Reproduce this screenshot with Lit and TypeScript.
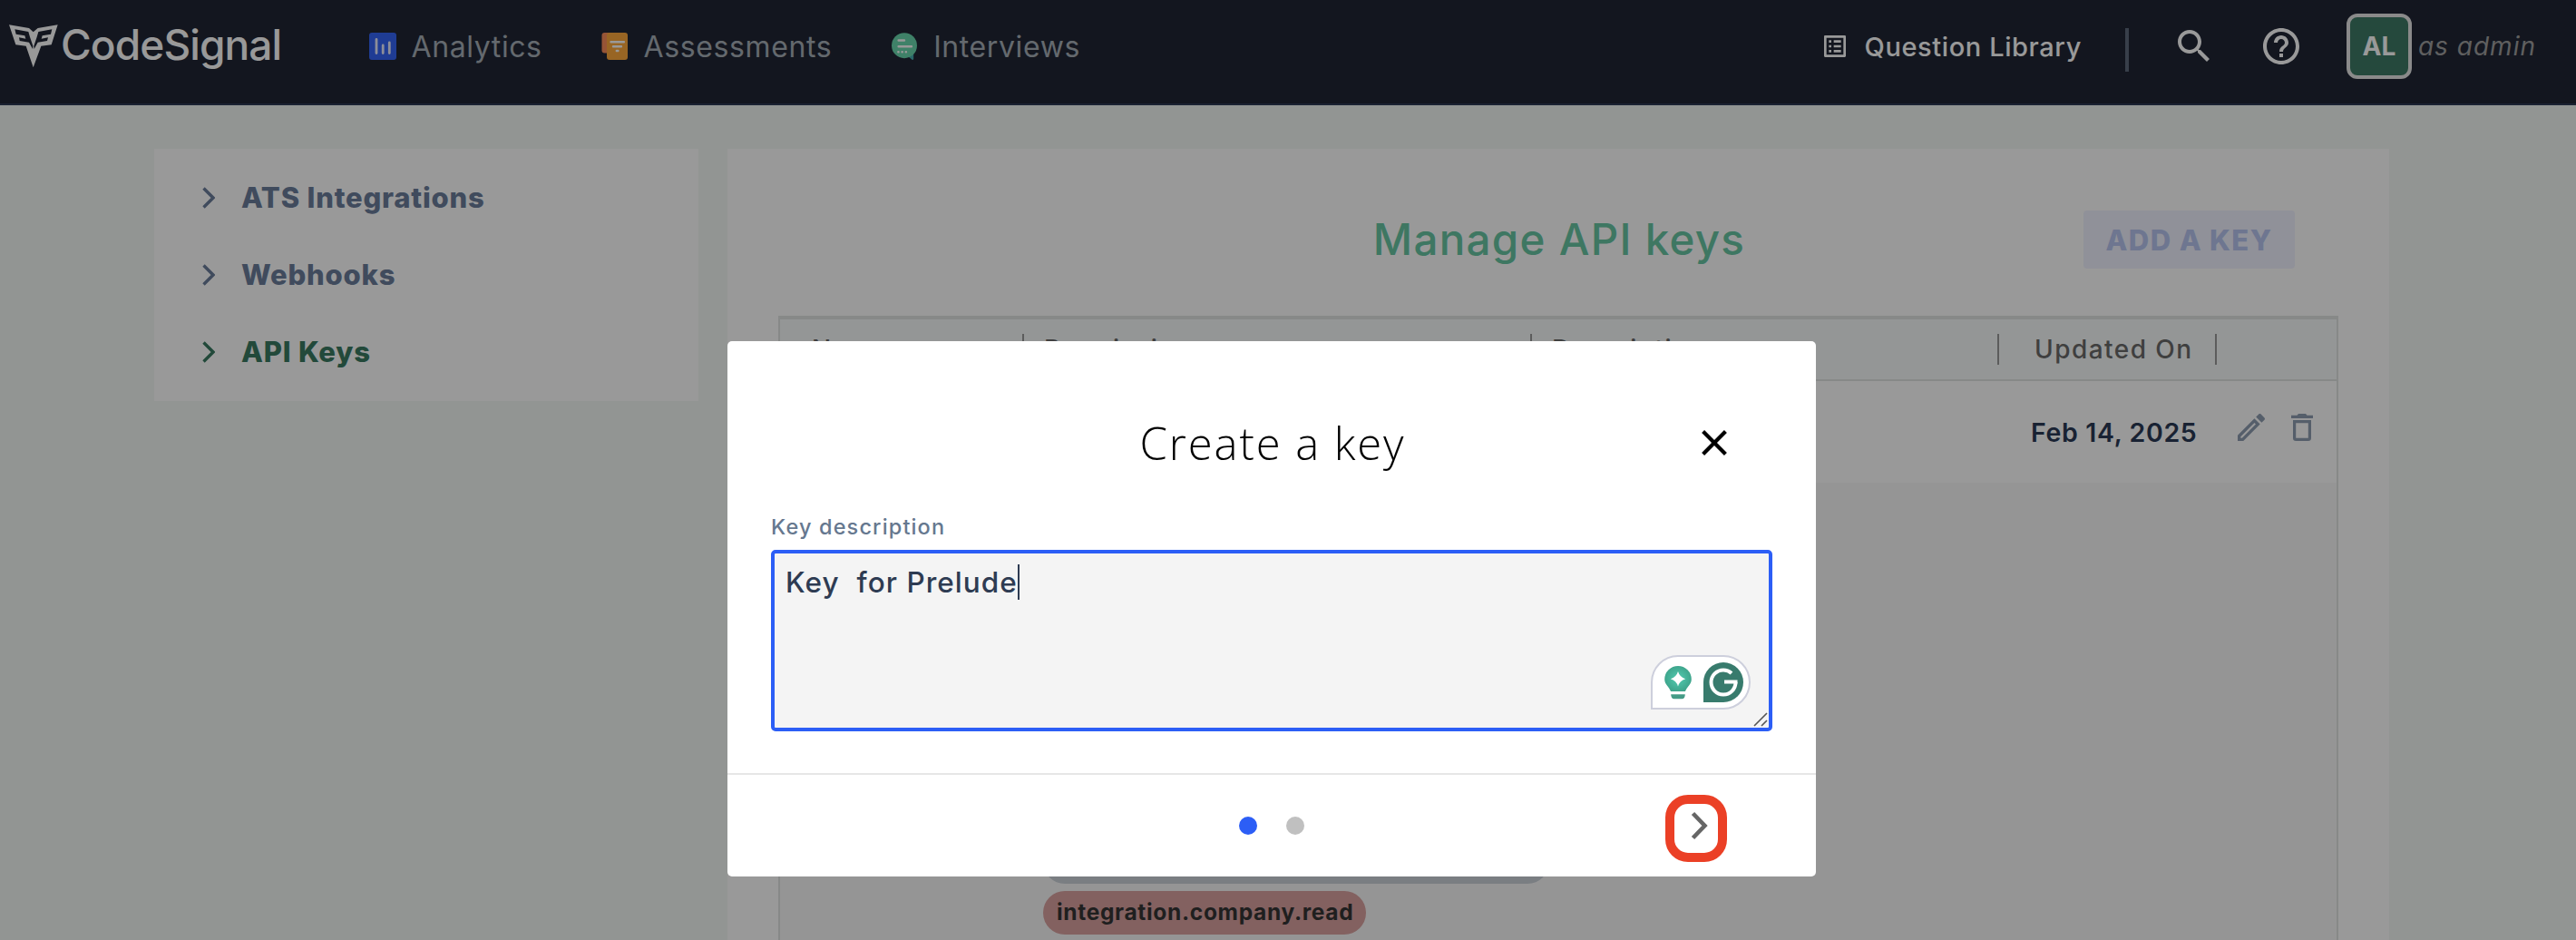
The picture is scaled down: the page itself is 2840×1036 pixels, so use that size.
import { LitElement, css, html, svg } from 'lit';
import { customElement, property, state } from 'lit/decorators.js';
import { classMap } from 'lit/directives/class-map.js';

type NavIcon = 'analytics' | 'assessments' | 'interviews';

interface NavItem {
  icon: NavIcon;
  label: string;
}

interface ApiKeyRow {
  updatedOn: string;
  permissions: { name: string; tone: 'neutral' | 'danger' }[];
}

const NAV_ITEMS: NavItem[] = [
  { icon: 'analytics', label: 'Analytics' },
  { icon: 'assessments', label: 'Assessments' },
  { icon: 'interviews', label: 'Interviews' },
];

const navIcons = {
  analytics: svg`
    <rect width="30" height="30" x="0" y="0" rx="3" fill="#3464f7" />
    <path d="M8 7.5v15M15.2 14v8.5M22.3 11v11.5" stroke="#e9edff" stroke-width="2.8" stroke-linecap="round" />
  `,
  assessments: svg`
    <rect x="0.5" y="0" width="14" height="22.5" rx="3" fill="#fa8c5a" />
    <rect x="6" y="0" width="23" height="30" rx="3" fill="#fda83c" />
    <path d="M10.5 10.3h14.4M13 15.3h9M16.8 20h1.6" stroke="#fff" stroke-width="2.4" stroke-linecap="round" />
  `,
  interviews: svg`
    <path d="M18 26l6.2-3.6v6.4q0 1.4-1.7 1z" fill="#45aeb0" />
    <circle cx="14" cy="14.2" r="14" fill="#69d7ad" />
    <path d="M7.6 8.5h6.4M7.6 15.3h14.4" stroke="#fff" stroke-width="2.4" stroke-linecap="round" />
    <path d="M7.4 21.3h.1M11.6 21.3h.1M15.8 21.3h.1" stroke="#fff" stroke-width="2.6" stroke-linecap="round" />
  `,
};

/**
 * Top navigation bar with the product logo, section links and account area.
 */
@customElement('cs-top-bar')
export class CsTopBar extends LitElement {
  @property({ type: String })
  initials = '';

  @property({ type: String, attribute: 'view-as' })
  viewAs = '';

  render() {
    return html`
      <header class="bar">
        <div class="brand">
          <svg class="mark" viewBox="30 52 162 142" fill="none">
            <path fill="#fff" d="M30 52l66 11 14 13 15-13 66-11-21 66-34 4-26 71-24-71-34-4z" />
            <path fill="#202635" d="M49 67l45 8 5 17 10 30-1 10-12-22-31-5-2-11 22 4-3-10-29-5z" />
            <path fill="#202635" d="M172 67l-45 8-5 17-10 30 1 10 12-22 31-5 3-11-22 4 3-10 28-5z" />
          </svg>
          <span class="brand-name">CodeSignal</span>
        </div>
        <nav class="nav">
          ${NAV_ITEMS.map((item) => html`
            <a class="nav-item">
              <svg class="nav-icon" viewBox="0 0 30 30" fill="none">${navIcons[item.icon]}</svg>
              <span>${item.label}</span>
            </a>
          `)}
        </nav>
        <div class="tools">
          <a class="library">
            <svg width="32" height="32" viewBox="0 0 24 24" fill="currentColor">
              <path d="M19 5v14H5V5h14m1.1-2H3.9c-.5 0-.9.4-.9.9v16.2c0 .4.4.9.9.9h16.2c.4 0 .9-.5.9-.9V3.9c0-.5-.5-.9-.9-.9zM11 7h6v2h-6V7zm0 4h6v2h-6v-2zm0 4h6v2h-6zM7 7h2v2H7zm0 4h2v2H7zm0 4h2v2H7z" />
            </svg>
            <span>Question Library</span>
          </a>
          <span class="divider"></span>
          <svg width="48" height="48" viewBox="0 0 24 24" fill="currentColor">
            <path d="M15.5 14h-.79l-.28-.27C15.41 12.59 16 11.11 16 9.5 16 5.91 13.09 3 9.5 3S3 5.91 3 9.5 5.91 16 9.5 16c1.61 0 3.09-.59 4.23-1.57l.27.28v.79l5 4.99L20.49 19l-4.99-5zm-6 0C7.01 14 5 11.99 5 9.5S7.01 5 9.5 5 14 7.01 14 9.5 11.99 14 9.5 14z" />
          </svg>
          <svg width="48" height="48" viewBox="0 0 24 24" fill="currentColor">
            <path d="M11 18h2v-2h-2v2zm1-16C6.48 2 2 6.48 2 12s4.48 10 10 10 10-4.48 10-10S17.52 2 12 2zm0 18c-4.41 0-8-3.59-8-8s3.59-8 8-8 8 3.59 8 8-3.59 8-8 8zm0-14c-2.21 0-4 1.79-4 4h2c0-1.1.9-2 2-2s2 .9 2 2c0 2-3 1.75-3 5h2c0-2.25 3-2.5 3-5 0-2.21-1.79-4-4-4z" />
          </svg>
          <div class="account">
            <span class="avatar">${this.initials}</span>
            <span class="view-as">as ${this.viewAs}</span>
          </div>
        </div>
      </header>
    `;
  }

  static styles = css`
    :host {
      display: block;
    }

    .bar {
      box-sizing: border-box;
      display: flex;
      align-items: center;
      height: 116px;
      padding: 0 44px 12px 10px;
      background: #202635;
      border-bottom: 2px solid #2d3a55;
      color: #fff;
    }

    .brand {
      display: flex;
      align-items: center;
      width: 397px;
    }

    .mark {
      width: 54px;
      height: 48px;
    }

    .brand-name {
      padding: 0 0 4px 3px;
      font-size: 46px;
      font-weight: 500;
      letter-spacing: -0.9px;
    }

    .nav {
      display: flex;
      gap: 65.5px;
      font-size: 32px;
      letter-spacing: 0.6px;
      color: #a7afb7;
    }

    .nav-item {
      display: flex;
      align-items: center;
      gap: 16.5px;
    }

    .nav-icon {
      width: 30px;
      height: 30px;
    }

    .tools {
      display: flex;
      align-items: center;
      gap: 48px;
      margin-left: auto;
    }

    .library {
      display: flex;
      align-items: center;
      gap: 17px;
      font-size: 29px;
      font-weight: 500;
      letter-spacing: 0.6px;
    }

    .divider {
      width: 4px;
      height: 48px;
      margin-top: 8px;
      background: #5e697c;
    }

    .account {
      display: flex;
      align-items: center;
      gap: 7px;
    }

    .avatar {
      box-sizing: border-box;
      display: flex;
      align-items: center;
      justify-content: center;
      width: 72px;
      height: 72px;
      border: 4px solid #e6e6e6;
      border-radius: 12px;
      background: #3e7b66;
      font-size: 28px;
      font-weight: 700;
    }

    .view-as {
      font-size: 28px;
      font-style: italic;
      letter-spacing: 1px;
      color: #9f9f9f;
    }
  `;
}

/**
 * Settings side menu.
 */
@customElement('cs-side-menu')
export class CsSideMenu extends LitElement {
  @property({ type: String })
  active = '';

  private _items = ['ATS Integrations', 'Webhooks', 'API Keys'];

  render() {
    return html`
      <ul class="menu">
        ${this._items.map((item) => html`
          <li class="${classMap({ item: true, active: item === this.active })}">
            <svg width="14" height="24" viewBox="0 0 14 24" fill="none">
              <path d="M1.5 1.5L12 12 1.5 22.5" stroke="currentColor" stroke-width="3.4" />
            </svg>
            <span>${item}</span>
          </li>
        `)}
      </ul>
    `;
  }

  static styles = css`
    :host {
      display: block;
    }

    .menu {
      box-sizing: border-box;
      height: 278px;
      margin: 0;
      padding: 11px 0 0;
      list-style: none;
      background: #fff;
    }

    .item {
      display: flex;
      align-items: center;
      gap: 29px;
      height: 85px;
      padding-left: 53px;
      font-size: 31px;
      font-weight: 800;
      letter-spacing: 0.8px;
      color: #6b7d9b;
    }

    .item.active {
      color: #3a7b62;
    }
  `;
}

/**
 * Panel listing the API keys.
 */
@customElement('cs-key-panel')
export class CsKeyPanel extends LitElement {
  @property({ attribute: false })
  rows: ApiKeyRow[] = [];

  render() {
    return html`
      <section class="panel">
        <div class="heading">
          <h1 class="title">Manage API keys</h1>
          <button class="add">ADD A KEY</button>
        </div>
        <div class="table">
          <div class="grid head">
            <span class="cell first">Name</span>
            <span class="cell">Permissions</span>
            <span class="cell">Description</span>
            <span class="cell updated">Updated On</span>
          </div>
          ${this.rows.map((row) => html`
            <div class="grid row">
              <span class="date">${row.updatedOn}</span>
              <span class="actions">
                <svg width="40" height="40" viewBox="0 0 24 24" fill="currentColor">
                  <path d="M14.06 9.02l.92.92L5.92 19H5v-.92l9.06-9.06M17.66 3c-.25 0-.51.1-.7.29l-1.83 1.83 3.75 3.75 1.83-1.83c.39-.39.39-1.02 0-1.41l-2.34-2.34c-.2-.2-.45-.29-.71-.29zm-3.6 3.19L3 17.25V21h3.75L17.81 9.94l-3.75-3.75z" />
                </svg>
                <svg width="24" height="30" viewBox="0 0 24 30" fill="none">
                  <path d="M0 1.7h6.5L8 0h8l1.5 1.7H24V5H0z" fill="currentColor" />
                  <path d="M3.6 8.6h16.8v18.2q0 1.6-1.6 1.6H5.2q-1.6 0-1.6-1.6z" stroke="currentColor" stroke-width="3.2" />
                </svg>
              </span>
            </div>
            <div class="details">
              ${row.permissions.map((p) => html`
                <span class="pill ${p.tone}">${p.name}</span>
              `)}
            </div>
          `)}
        </div>
      </section>
    `;
  }

  static styles = css`
    :host {
      display: block;
    }

    .panel {
      box-sizing: border-box;
      height: 100%;
      padding: 68px 56px 0;
      background: #fff;
    }

    .heading {
      display: grid;
      grid-template-columns: 1fr auto 1fr;
      align-items: center;
      height: 64px;
      margin-bottom: 52px;
    }

    .title {
      grid-column: 2;
      margin: 0;
      padding: 0 0 2px 2px;
      font-size: 47.5px;
      font-weight: 500;
      letter-spacing: 1.3px;
      color: #68c6a4;
    }

    .add {
      justify-self: end;
      width: 233px;
      height: 64px;
      margin-right: 48px;
      padding: 0;
      border: 0;
      border-radius: 4px;
      background: #f0f2ff;
      font: 800 31px "Inter", sans-serif;
      letter-spacing: 1.4px;
      white-space: nowrap;
      color: #b7c5f0;
    }

    .table {
      border: 2px solid #e1e4e3;
      border-top-width: 4px;
      border-bottom: 0;
    }

    .grid {
      display: grid;
      grid-template-columns: 269px 560px 515px 240px 1fr;
      align-items: center;
    }

    .head {
      height: 66px;
      background: #f7fbfa;
      border-bottom: 2px solid #e1e4e3;
      font-size: 28px;
      font-weight: 500;
      letter-spacing: 1.45px;
      color: #6a6a6a;
    }

    .cell {
      padding-left: 22px;
      line-height: 34px;
      border-right: 2px solid #999;
    }

    .cell.first {
      padding-left: 35px;
    }

    .cell.updated {
      padding-left: 39px;
    }

    .row {
      height: 112px;
    }

    .date {
      grid-column: 4;
      padding-left: 35px;
      font-size: 28.5px;
      font-weight: 600;
      letter-spacing: 0.65px;
      white-space: nowrap;
      color: #2b3a55;
    }

    .actions {
      display: flex;
      align-items: center;
      gap: 24px;
      padding: 0 0 10px 18px;
      color: #8e9db1;
    }

    .details {
      box-sizing: border-box;
      display: flex;
      flex-direction: column;
      align-items: flex-start;
      gap: 8px;
      height: 600px;
      padding: 394px 0 0 290px;
      background: #f9f9f9;
    }

    .pill {
      box-sizing: border-box;
      height: 48px;
      padding: 0 14px 0 15px;
      border-radius: 24px;
      font-size: 24.5px;
      font-weight: 700;
      line-height: 47px;
      letter-spacing: 0.68px;
      color: #343434;
    }

    .pill.neutral {
      width: 558px;
      background: #cbd2d9;
    }

    .pill.danger {
      background: #daa2a0;
    }
  `;
}

/**
 * Two-step dialog for creating an API key.
 */
@customElement('cs-create-key-dialog')
export class CsCreateKeyDialog extends LitElement {
  @property({ type: String })
  value = '';

  @property({ type: Number })
  step = 0;

  render() {
    return html`
      <div class="dialog" role="dialog">
        <div class="header">
          <h2 class="title">Create a key</h2>
          <svg class="close" width="48" height="48" viewBox="0 0 24 24" fill="none">
            <path d="M5.8 5.8l12.4 12.4M18.2 5.8L5.8 18.2" stroke="#000" stroke-width="2.1" />
          </svg>
        </div>
        <div class="body">
          <label class="label">Key description</label>
          <div class="field">
            <span class="value">${this.value}</span><span class="caret"></span>
            <div class="assistant">
              <svg width="30" height="37" viewBox="0 0 30 37">
                <defs>
                  <radialGradient id="bulb">
                    <stop offset="0.3" stop-color="#4cc0a6" />
                    <stop offset="1" stop-color="#3ea58c" />
                  </radialGradient>
                </defs>
                <path d="M15 0a14.8 14.8 0 0 1 14.8 14.8c0 5.5-5 8.2-6.8 13.2H7C5.2 23 .2 20.3.2 14.8A14.8 14.8 0 0 1 15 0z" fill="url(#bulb)" />
                <path d="M7.2 31.3h15.6q0 5-3.6 5h-8.4q-3.6 0-3.6-5z" fill="#449b86" />
                <path d="M15 6q1.8 6.3 8.2 8.2-6.4 1.9-8.2 8.2-1.8-6.3-8.2-8.2Q13.2 12.3 15 6z" fill="#fff" />
              </svg>
              <svg width="44" height="44" viewBox="0 0 44 44">
                <path d="M22 0a22 22 0 0 1 0 44H0V22A22 22 0 0 1 22 0z" fill="#387b6d" />
                <circle cx="22" cy="22" r="13.5" fill="none" stroke="#fff" stroke-width="4" pathLength="360" stroke-dasharray="312 48" />
                <rect x="23" y="19.5" width="14.5" height="4" fill="#fff" />
              </svg>
            </div>
            <svg class="grip" width="16" height="16" viewBox="0 0 16 16">
              <path d="M1 15L15 1M9 15l6-6" stroke="#555" stroke-width="1.6" />
            </svg>
          </div>
        </div>
        <div class="footer">
          <div class="dots">
            ${[0, 1].map((i) => html`
              <span class="${classMap({ dot: true, current: i === this.step })}"></span>
            `)}
          </div>
          <button class="next">
            <svg width="20" height="32" viewBox="0 0 20 32" fill="none">
              <path d="M2.5 2.5L15.5 16 2.5 29.5" stroke="#666" stroke-width="4.6" />
            </svg>
            <span class="highlight"></span>
          </button>
        </div>
      </div>
    `;
  }

  static styles = css`
    :host {
      display: block;
    }

    .dialog {
      box-sizing: border-box;
      display: flex;
      flex-direction: column;
      width: 1200px;
      height: 590px;
      padding-top: 82px;
      border-radius: 5px;
      background: #fff;
    }

    .header {
      display: grid;
      grid-template-columns: 1fr auto 1fr;
      align-items: center;
      height: 60px;
    }

    .title {
      grid-column: 2;
      margin: 0;
      padding: 0 0 1px 2px;
      font-family: "Open Sans", sans-serif;
      font-size: 49px;
      font-weight: 300;
      line-height: 56px;
      letter-spacing: 1.9px;
      color: #000;
    }

    .close {
      justify-self: end;
      margin-right: 88px;
    }

    .body {
      flex: 1;
      padding: 47px 48px 0;
    }

    .label {
      display: block;
      margin-bottom: 9px;
      font-size: 23.5px;
      font-weight: 500;
      line-height: 32px;
      letter-spacing: 1.15px;
      color: #66788f;
    }

    .field {
      position: relative;
      box-sizing: border-box;
      display: flex;
      height: 200px;
      padding: 12px;
      border: 4px solid #2c5ef6;
      border-radius: 5px;
      background: #f4f4f4;
    }

    .value {
      font-size: 31.5px;
      font-weight: 500;
      line-height: 40px;
      letter-spacing: 1.05px;
      white-space: pre;
      color: #2e3b52;
    }

    .caret {
      width: 2px;
      height: 39px;
      background: #2e3b52;
    }

    .assistant {
      position: absolute;
      right: 20px;
      bottom: 20px;
      box-sizing: border-box;
      display: flex;
      align-items: center;
      justify-content: space-between;
      width: 110px;
      height: 60px;
      padding: 0 6px 0 13px;
      border: 2px solid #cdcfdc;
      border-radius: 30px 30px 30px 0;
      background: #fff;
    }

    .grip {
      position: absolute;
      right: 1px;
      bottom: 1px;
    }

    .footer {
      display: grid;
      grid-template-columns: 1fr auto 1fr;
      align-items: center;
      height: 112px;
      border-top: 2px solid #e6e6e6;
    }

    .dots {
      grid-column: 2;
      display: flex;
      gap: 32px;
    }

    .dot {
      width: 20px;
      height: 20px;
      border-radius: 50%;
      background: #c0c0c0;
    }

    .dot.current {
      background: #2c5ef6;
    }

    .next {
      position: relative;
      justify-self: end;
      display: flex;
      align-items: center;
      justify-content: center;
      width: 48px;
      height: 68px;
      margin-right: 104px;
      padding: 0;
      border: 0;
      background: none;
    }

    /* Ring drawn around the next button, reaching past its box */
    .highlight {
      position: absolute;
      inset: 0 -6px -6px -14px;
      border: 10px solid #eb4026;
      border-radius: 25px;
    }
  `;
}

@customElement('app-root')
export class AppRoot extends LitElement {
  @state()
  private _rows: ApiKeyRow[] = [
    {
      updatedOn: 'Feb 14, 2025',
      permissions: [
        { name: '', tone: 'neutral' },
        { name: 'integration.company.read', tone: 'danger' },
      ],
    },
  ];

  render() {
    return html`
      <div class="page">
        <cs-top-bar initials="AL" view-as="admin"></cs-top-bar>
        <main class="content">
          <cs-side-menu class="side" active="API Keys"></cs-side-menu>
          <cs-key-panel class="panel" .rows=${this._rows}></cs-key-panel>
        </main>
        <div class="scrim">
          <cs-create-key-dialog value="Key  for Prelude"></cs-create-key-dialog>
        </div>
      </div>
    `;
  }

  static styles = css`
    :host {
      display: block;
      font-family: "Inter", sans-serif;
    }

    .page {
      position: relative;
      height: 1036px;
      overflow: hidden;
      background: #f3f8f5;
    }

    .content {
      display: flex;
      align-items: flex-start;
      gap: 32px;
      padding: 48px 206px 0 170px;
    }

    .side {
      width: 600px;
    }

    .panel {
      flex: 1;
    }

    /* Dims the page behind the dialog */
    .scrim {
      position: absolute;
      inset: 0;
      box-sizing: border-box;
      display: flex;
      justify-content: center;
      align-items: flex-start;
      padding: 376px 36px 0 0;
      background: rgba(0, 0, 0, 0.4);
    }
  `;
}

declare global {
  interface HTMLElementTagNameMap {
    'app-root': AppRoot;
  }
}
